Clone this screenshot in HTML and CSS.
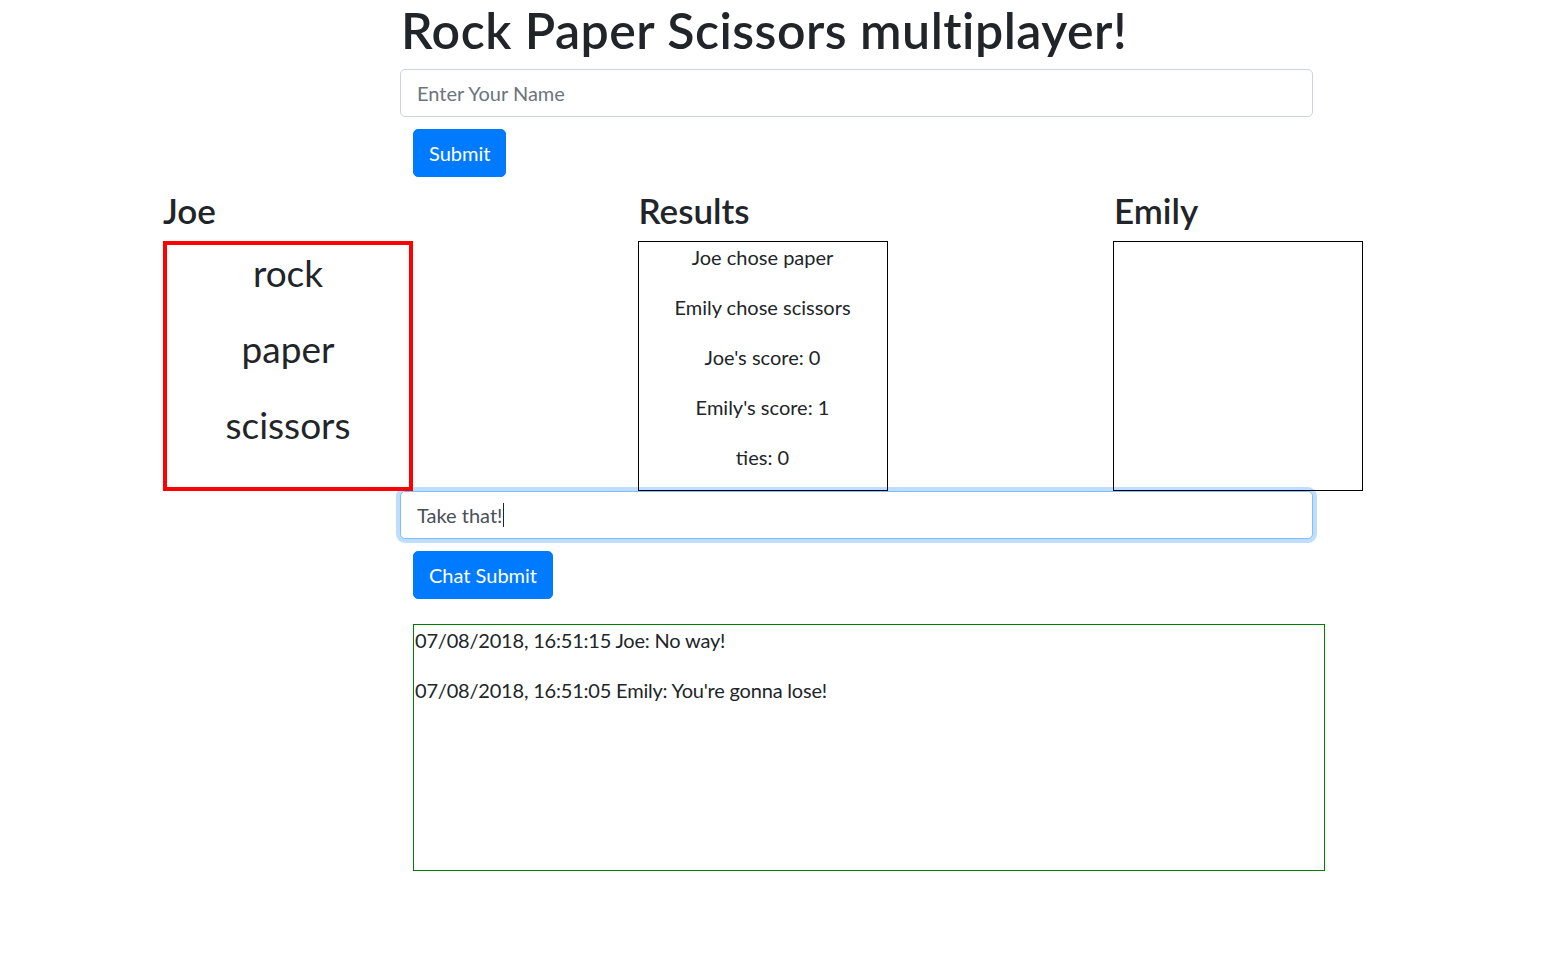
FILE: index.html
```html
<!DOCTYPE html>
<html lang="en">
<head>
<meta charset="utf-8">
<title>Rock Paper Scissors multiplayer!</title>
<link rel="stylesheet" href="styles.css">
</head>
<body>
<div class="top">
  <h1 class="title">Rock Paper Scissors multiplayer!</h1>
  <input class="form-control" type="text" placeholder="Enter Your Name">
  <button class="btn">Submit</button>
</div>

<div class="players">
  <div class="col">
    <h3 class="col-title">Joe</h3>
    <div class="box box-choices">
      <p class="choice">rock</p>
      <p class="choice">paper</p>
      <p class="choice">scissors</p>
    </div>
  </div>
  <div class="col">
    <h3 class="col-title">Results</h3>
    <div class="box box-results">
      <p class="line">Joe chose paper</p>
      <p class="line">Emily chose scissors</p>
      <p class="line">Joe's score: 0</p>
      <p class="line">Emily's score: 1</p>
      <p class="line">ties: 0</p>
    </div>
  </div>
  <div class="col">
    <h3 class="col-title">Emily</h3>
    <div class="box box-plain"></div>
  </div>
</div>

<div class="chat">
  <div class="form-control focused"><span class="typed">Take that!</span><span class="caret"></span></div>
  <button class="btn">Chat Submit</button>
  <div class="chat-log">
    <p class="line">07/08/2018, 16:51:15 Joe: No way!</p>
    <p class="line">07/08/2018, 16:51:05 Emily: You're gonna lose!</p>
  </div>
</div>
</body>
</html>
```

FILE: styles.css
```css
* { box-sizing: border-box; }

body {
  margin: 0;
  font-family: "Lato", "Open Sans", sans-serif;
  font-size: 20px;
  line-height: 30px;
  color: #212529;
  background: #fff;
}

.top {
  margin-left: 400px;
  width: 913px;
}

.title {
  margin: 0 0 9px 1px;
  font-size: 50px;
  line-height: 60px;
  font-weight: 600;
  letter-spacing: 0.5px;
  white-space: nowrap;
}

.form-control {
  display: flex;
  align-items: center;
  width: 913px;
  height: 48px;
  padding: 0 16px;
  border: 1px solid #ced4da;
  border-radius: 5px;
  font-family: inherit;
  font-size: 20px;
  color: #495057;
  background: #fff;
}

.form-control::placeholder { color: #6c757d; }

.focused {
  border-color: #80bdff;
  box-shadow: 0 0 0 4px rgba(0, 123, 255, 0.25);
}

.caret {
  display: inline-block;
  width: 1px;
  height: 24px;
  background: #212529;
  margin-left: 1px;
}

.btn {
  display: block;
  height: 48px;
  margin: 12px 0 0 13px;
  padding: 0 15px;
  border: 1px solid #007bff;
  border-radius: 5px;
  background: #007bff;
  color: #fff;
  font-family: inherit;
  font-size: 20px;
  line-height: 30px;
}

.players {
  display: grid;
  grid-template-columns: repeat(3, 475.5px);
  margin: 12px 0 0 163px;
}

.col-title {
  margin: 0 0 10px;
  font-size: 35px;
  line-height: 42px;
  font-weight: 600;
}

.box {
  width: 250px;
  height: 250px;
  text-align: center;
}

.box-choices {
  border: 4px solid #f00;
}

.box-results, .box-plain {
  border: 1px solid #000;
  margin-left: -1px;
}

.choice {
  margin: 0 0 20px;
  font-size: 37px;
  line-height: 56px;
}

.line {
  margin: 0 0 20px;
}

.chat {
  margin-left: 400px;
  width: 913px;
}

.chat-log {
  width: 912px;
  height: 247px;
  margin: 25px 0 0 13px;
  border: 1px solid #008000;
  padding: 0 1px;
  letter-spacing: -0.2px;
}
```
